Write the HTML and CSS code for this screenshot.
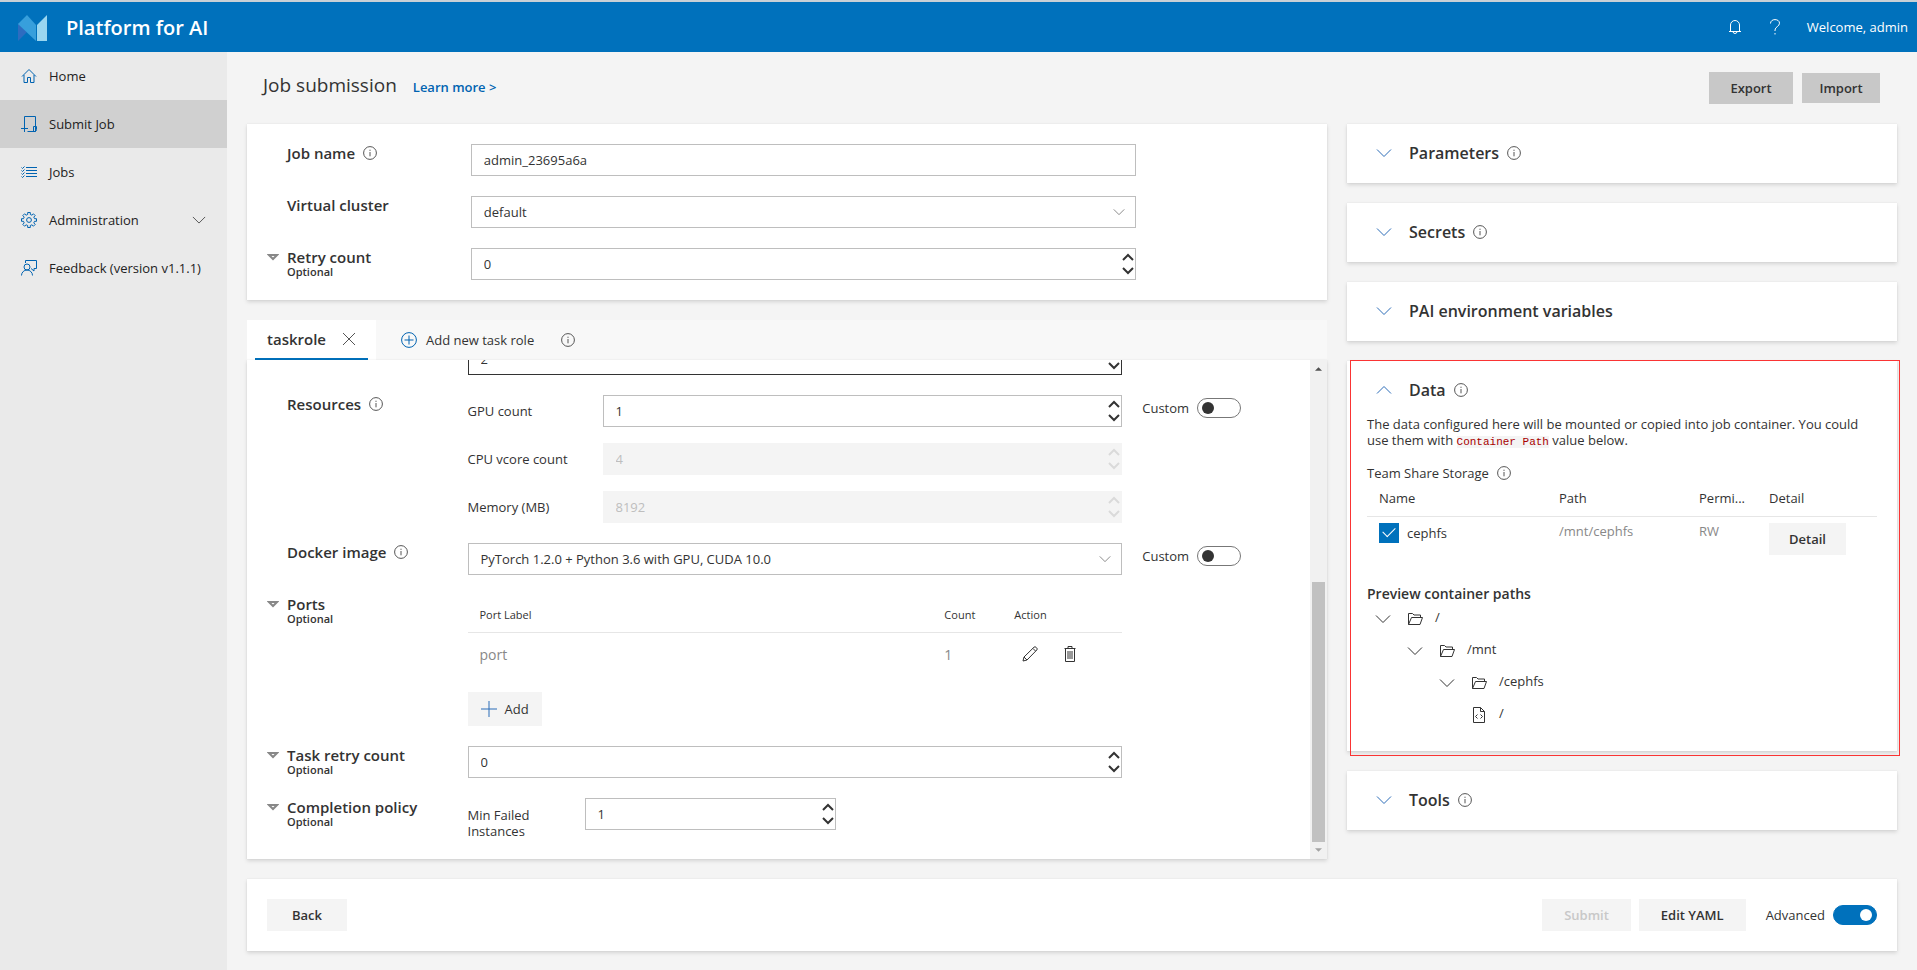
FILE: index.html
```html
<!DOCTYPE html>
<html lang="en">
<head>
    <meta charset="UTF-8">
    <meta name="viewport" content="width=device-width, initial-scale=1.0">
    <title>Platform for AI</title>
    <link rel="stylesheet" href="styles.css">
</head>
<body>
    <!-- Icon set -->
    <svg class="icon-set" aria-hidden="true">
        <symbol id="i-info" viewBox="0 0 14 14"><circle cx="7" cy="7" r="6.4"/><path d="M7 6v4.3M7 3.7v1.2"/></symbol>
        <symbol id="i-chevron" viewBox="0 0 16 16"><path d="M1 4.5l7 7 7-7"/></symbol>
        <symbol id="i-step-up" viewBox="0 0 12 8"><path d="M1 7l5-5 5 5"/></symbol>
        <symbol id="i-step-down" viewBox="0 0 12 8"><path d="M1 1l5 5 5-5"/></symbol>
        <symbol id="i-triangle" viewBox="0 0 12 7"><path d="M2 1h8L6 5z"/></symbol>
        <symbol id="i-folder" viewBox="0 0 16 16"><path d="M1.500 13.500v-11h4l1.500 1.500h6.500v3M1.500 13.500l3-7H15.500l-2.500 7z"/></symbol>
        <symbol id="i-file" viewBox="0 0 16 16"><path d="M2.500.500h7l4 4v11h-11zM9.500.500v4h4M6.500 7.500l-2 2 2 2M9.500 7.500l2 2-2 2"/></symbol>
    </svg>

    <header class="header">
        <svg class="logo" viewBox="0 0 30 26" aria-hidden="true">
            <path fill="#2d6cc0" d="M0 8v18l9-9z"/>
            <path fill="#379fdc" d="M0 9l9-9 9 10v16z"/>
            <path fill="#9ad6f0" d="M19 10L29 0v26H19z"/>
        </svg>
        <div class="brand">Platform for AI</div>
        <button class="header-button" aria-label="Notifications">
            <svg viewBox="0 0 16 16"><path d="M3.500 12.500V6a4.500 4.500 0 0 1 9 0v6.500M2 12.500h12M6 12.500a2 2 0 0 0 4 0"/></svg>
        </button>
        <button class="header-button" aria-label="Help">
            <svg viewBox="0 0 16 16"><path d="M3.500 4.500C3.500 2 5.500.600 8 .600s4.500 1.400 4.500 3.600c0 3.300-4.500 3.600-4.500 6.800v1M8 14v1.500"/></svg>
        </button>
        <span class="welcome">Welcome, admin</span>
    </header>

    <div class="page">
        <nav class="sidebar">
            <a class="nav-item" href="#">
                <svg viewBox="0 0 16 16"><path d="M1 8.500l7-7 7 7M3 7v7.500h3.500v-5h3v5H13V7"/></svg>
                Home
            </a>
            <a class="nav-item active" href="#">
                <svg viewBox="0 0 16 16"><path d="M3.500 9V.500h11v15h-8M0 12.500h7M3.500 9v7M12.500 15.500v-5h3v3q0 2-2 2"/></svg>
                Submit Job
            </a>
            <a class="nav-item" href="#">
                <svg viewBox="0 0 16 16"><path d="M5 3.500h11M5 6.500h11M5 9.500h11M5 12.500h11M.500 3.500l1 1 2-2M.500 6.500l1 1 2-2M.500 9.500l1 1 2-2M.500 12.500l1 1 2-2"/></svg>
                Jobs
            </a>
            <a class="nav-item" href="#">
                <svg viewBox="0 0 16 16"><path d="M6.700.500h2.600v2l1.600.700L12.400 1.800l1.800 1.800-1.400 1.500.700 1.600h2v2.600h-2l-.700 1.600 1.400 1.500-1.800 1.800-1.500-1.400-1.600.700v2H6.700v-2l-1.600-.700-1.500 1.400-1.800-1.800 1.400-1.500-.700-1.600h-2V6.700h2l.700-1.600-1.400-1.500 1.800-1.800 1.500 1.400 1.600-.700z"/><circle cx="8" cy="8" r="2.400"/></svg>
                Administration
                <svg class="nav-chevron"><use href="#i-chevron"/></svg>
            </a>
            <a class="nav-item" href="#">
                <svg viewBox="0 0 16 16"><path d="M4.500 3V.500h11v8h-2.500v2.500L10 8.500"/><circle cx="6" cy="7" r="3"/><path d="M.500 15.500a5.500 5.500 0 0 1 11 0"/></svg>
                Feedback (version v1.1.1)
            </a>
        </nav>

        <main class="main">
            <div class="title-bar">
                <h1>Job submission</h1>
                <a class="learn-more" href="#">Learn more &gt;</a>
                <button class="button export">Export</button>
                <button class="button import">Import</button>
            </div>

            <div class="columns">
                <div class="left">
                    <section class="card job-info">
                        <div class="row">
                            <div class="label"><label for="job-name">Job name</label><svg class="info"><use href="#i-info"/></svg></div>
                            <input class="box" type="text" id="job-name" value="admin_23695a6a">
                        </div>
                        <div class="row">
                            <div class="label"><label for="cluster">Virtual cluster</label></div>
                            <div class="select">
                                <select class="box" id="cluster"><option>default</option></select>
                                <svg><use href="#i-chevron"/></svg>
                            </div>
                        </div>
                        <div class="row">
                            <div class="label optional">
                                <svg class="triangle"><use href="#i-triangle"/></svg>
                                <label for="retry">Retry count</label>
                                <small>Optional</small>
                            </div>
                            <div class="box number">
                                <input type="number" id="retry" value="0">
                                <div class="stepper">
                                    <button aria-label="Increase"><svg><use href="#i-step-up"/></svg></button>
                                    <button aria-label="Decrease"><svg><use href="#i-step-down"/></svg></button>
                                </div>
                            </div>
                        </div>
                    </section>

                    <section class="task-role">
                        <div class="tabs">
                            <div class="tab">
                                <button class="tab-name">taskrole</button>
                                <button class="tab-close" aria-label="Close"><svg viewBox="0 0 14 14"><path d="M1 1l12 12M13 1L1 13"/></svg></button>
                            </div>
                            <button class="add-role">
                                <svg viewBox="0 0 16 16"><circle cx="8" cy="8" r="7.400"/><path d="M8 3.500v9M3.500 8h9"/></svg>
                                Add new task role
                            </button>
                            <svg class="info"><use href="#i-info"/></svg>
                        </div>
                        <div class="scroll-panel">
                            <div class="scroll-content">
                                <div class="row">
                                    <div class="label"><label for="instances">Instances</label></div>
                                    <div class="box number focused">
                                        <input type="number" id="instances" value="2">
                                        <div class="stepper">
                                            <button aria-label="Increase"><svg><use href="#i-step-up"/></svg></button>
                                            <button aria-label="Decrease"><svg><use href="#i-step-down"/></svg></button>
                                        </div>
                                    </div>
                                </div>
                                <div class="row">
                                    <div class="label">Resources<svg class="info"><use href="#i-info"/></svg></div>
                                    <div class="resources">
                                        <label for="gpu">GPU count</label>
                                        <div class="box number">
                                            <input type="number" id="gpu" value="1">
                                            <div class="stepper">
                                                <button aria-label="Increase"><svg><use href="#i-step-up"/></svg></button>
                                                <button aria-label="Decrease"><svg><use href="#i-step-down"/></svg></button>
                                            </div>
                                        </div>
                                        <label for="cpu">CPU vcore count</label>
                                        <div class="box number disabled">
                                            <input type="number" id="cpu" value="4" disabled>
                                            <div class="stepper">
                                                <button aria-label="Increase" disabled><svg><use href="#i-step-up"/></svg></button>
                                                <button aria-label="Decrease" disabled><svg><use href="#i-step-down"/></svg></button>
                                            </div>
                                        </div>
                                        <label for="memory">Memory (MB)</label>
                                        <div class="box number disabled">
                                            <input type="number" id="memory" value="8192" disabled>
                                            <div class="stepper">
                                                <button aria-label="Increase" disabled><svg><use href="#i-step-up"/></svg></button>
                                                <button aria-label="Decrease" disabled><svg><use href="#i-step-down"/></svg></button>
                                            </div>
                                        </div>
                                    </div>
                                    <label class="custom">Custom <input class="toggle" type="checkbox"></label>
                                </div>
                                <div class="row">
                                    <div class="label"><label for="image">Docker image</label><svg class="info"><use href="#i-info"/></svg></div>
                                    <div class="select">
                                        <select class="box" id="image"><option>PyTorch 1.2.0 + Python 3.6 with GPU, CUDA 10.0</option></select>
                                        <svg><use href="#i-chevron"/></svg>
                                    </div>
                                    <label class="custom">Custom <input class="toggle" type="checkbox"></label>
                                </div>
                                <div class="row">
                                    <div class="label optional">
                                        <svg class="triangle"><use href="#i-triangle"/></svg>
                                        <span>Ports</span>
                                        <small>Optional</small>
                                    </div>
                                    <div class="ports">
                                        <table class="ports-table">
                                            <thead>
                                                <tr><th class="port-label">Port Label</th><th class="port-count">Count</th><th>Action</th></tr>
                                            </thead>
                                            <tbody>
                                                <tr>
                                                    <td>port</td>
                                                    <td>1</td>
                                                    <td class="port-actions">
                                                        <button aria-label="Edit"><svg viewBox="0 0 16 16"><path d="M1 15l1-4L12 1.200q1-1 2.200.200l.400.400q1.200 1.200.200 2.200L5 14zM2 11l3 3M11 2.500L13.500 5"/></svg></button>
                                                        <button aria-label="Delete"><svg viewBox="0 0 16 16"><path d="M2.500 2.500h11M6 2.500v-2h4v2M3.500 2.500v13h9v-13M6 5v8M8 5v8M10 5v8"/></svg></button>
                                                    </td>
                                                </tr>
                                            </tbody>
                                        </table>
                                        <button class="add-port"><svg viewBox="0 0 16 16"><path d="M8 0v16M0 8h16"/></svg>Add</button>
                                    </div>
                                </div>
                                <div class="row">
                                    <div class="label optional">
                                        <svg class="triangle"><use href="#i-triangle"/></svg>
                                        <label for="task-retry">Task retry count</label>
                                        <small>Optional</small>
                                    </div>
                                    <div class="box number">
                                        <input type="number" id="task-retry" value="0">
                                        <div class="stepper">
                                            <button aria-label="Increase"><svg><use href="#i-step-up"/></svg></button>
                                            <button aria-label="Decrease"><svg><use href="#i-step-down"/></svg></button>
                                        </div>
                                    </div>
                                </div>
                                <div class="row">
                                    <div class="label optional">
                                        <svg class="triangle"><use href="#i-triangle"/></svg>
                                        <span>Completion policy</span>
                                        <small>Optional</small>
                                    </div>
                                    <div class="completion">
                                        <label for="min-failed">Min Failed Instances</label>
                                        <div class="box number">
                                            <input type="number" id="min-failed" value="1">
                                            <div class="stepper">
                                                <button aria-label="Increase"><svg><use href="#i-step-up"/></svg></button>
                                                <button aria-label="Decrease"><svg><use href="#i-step-down"/></svg></button>
                                            </div>
                                        </div>
                                    </div>
                                </div>
                            </div>
                            <div class="scrollbar" aria-hidden="true">
                                <svg class="arrow-up" viewBox="0 0 8 4"><path d="M4 0l4 4H0z"/></svg>
                                <div class="track"><div class="thumb"></div></div>
                                <svg class="arrow-down" viewBox="0 0 8 4"><path d="M0 0h8L4 4z"/></svg>
                            </div>
                        </div>
                    </section>
                </div>

                <aside class="right">
                    <section class="card panel">
                        <button class="panel-title"><svg class="panel-chevron"><use href="#i-chevron"/></svg>Parameters<svg class="info"><use href="#i-info"/></svg></button>
                    </section>
                    <section class="card panel">
                        <button class="panel-title"><svg class="panel-chevron"><use href="#i-chevron"/></svg>Secrets<svg class="info"><use href="#i-info"/></svg></button>
                    </section>
                    <section class="card panel">
                        <button class="panel-title"><svg class="panel-chevron"><use href="#i-chevron"/></svg>PAI environment variables</button>
                    </section>
                    <section class="card panel data">
                        <button class="panel-title"><svg class="panel-chevron open"><use href="#i-chevron"/></svg>Data<svg class="info"><use href="#i-info"/></svg></button>
                        <div class="data-body">
                            <p>The data configured here will be mounted or copied into job container. You could use them with <code>Container Path</code> value below.</p>
                            <div class="storage-title">Team Share Storage<svg class="info"><use href="#i-info"/></svg></div>
                            <table class="storage-table">
                                <thead>
                                    <tr><th class="col-name">Name</th><th class="col-path">Path</th><th class="col-permission">Permi...</th><th>Detail</th></tr>
                                </thead>
                                <tbody>
                                    <tr>
                                        <td><label class="storage-name"><input type="checkbox" checked>cephfs</label></td>
                                        <td class="muted">/mnt/cephfs</td>
                                        <td class="muted">RW</td>
                                        <td><button class="button detail">Detail</button></td>
                                    </tr>
                                </tbody>
                            </table>
                            <h3>Preview container paths</h3>
                            <ul class="tree">
                                <li>
                                    <div class="node"><svg class="node-chevron"><use href="#i-chevron"/></svg><svg><use href="#i-folder"/></svg><span>/</span></div>
                                    <ul>
                                        <li>
                                            <div class="node"><svg class="node-chevron"><use href="#i-chevron"/></svg><svg><use href="#i-folder"/></svg><span>/mnt</span></div>
                                            <ul>
                                                <li>
                                                    <div class="node"><svg class="node-chevron"><use href="#i-chevron"/></svg><svg><use href="#i-folder"/></svg><span>/cephfs</span></div>
                                                    <ul>
                                                        <li><div class="node"><svg><use href="#i-file"/></svg><span>/</span></div></li>
                                                    </ul>
                                                </li>
                                            </ul>
                                        </li>
                                    </ul>
                                </li>
                            </ul>
                        </div>
                        <div class="highlight"></div>
                    </section>
                    <section class="card panel">
                        <button class="panel-title"><svg class="panel-chevron"><use href="#i-chevron"/></svg>Tools<svg class="info"><use href="#i-info"/></svg></button>
                    </section>
                </aside>
            </div>

            <footer class="card actions">
                <button class="button back">Back</button>
                <button class="button submit" disabled>Submit</button>
                <button class="button">Edit YAML</button>
                <label class="advanced">Advanced <input class="toggle" type="checkbox" checked></label>
            </footer>
        </main>
    </div>
</body>
</html>
```
FILE: styles.css
```css
* {
    box-sizing: border-box;
}

body {
    display: flex;
    flex-direction: column;
    min-height: 100vh;
    margin: 0;
    font-family: "Open Sans", "Noto Sans", sans-serif;
    font-size: 13px;
    line-height: 16px;
    color: #333333;
    background-color: #f4f4f4;
}

button,
input,
select {
    font: inherit;
    color: inherit;
}

button {
    padding: 0;
    border: none;
    background: none;
    cursor: pointer;
}

a {
    text-decoration: none;
}

h1,
h3,
p,
ul {
    margin: 0;
    padding: 0;
    list-style: none;
}

svg {
    flex: none;
    width: 16px;
    height: 16px;
    fill: none;
    stroke: currentColor;
}

.icon-set {
    display: none;
}

.info {
    width: 14px;
    height: 14px;
    margin-left: 8px;
    color: #555555;
}

/* Header */
.header {
    display: flex;
    align-items: center;
    height: 52px;
    padding: 2px 9px 0 18px;
    border-top: 2px solid #c8d0d6;
    background-color: #0071bc;
    color: #ffffff;
}

.logo {
    width: 30px;
    height: 26px;
    margin-right: 18px;
    stroke: none;
}

.brand {
    flex: 1;
    font-size: 20px;
    line-height: 24px;
    font-weight: 600;
}

.header-button {
    display: flex;
    margin-right: 24px;
}

.header-button,
.welcome {
    padding-bottom: 2px;
}

/* Sidebar */
.page {
    display: flex;
    flex: 1;
}

.sidebar {
    flex: none;
    width: 227px;
    background-color: #eaeaea;
}

.nav-item {
    display: flex;
    align-items: center;
    gap: 12px;
    height: 48px;
    padding: 0 21px;
    color: #222222;
}

.nav-item svg {
    color: #0063b1;
}

.nav-item.active {
    background-color: #d0d0d0;
}

.nav-item .nav-chevron {
    width: 14px;
    height: 14px;
    margin-left: auto;
    color: #444444;
}

/* Main */
.main {
    display: flex;
    flex: 1;
    flex-direction: column;
    min-width: 0;
    padding: 0 20px 19px;
}

.title-bar {
    display: flex;
    align-items: center;
    height: 72px;
    padding: 0 17px 0 16px;
}

.title-bar h1 {
    padding-bottom: 6px;
    font-size: 19px;
    line-height: 24px;
    font-weight: 400;
}

.learn-more {
    margin-left: 16px;
    padding-bottom: 2px;
    font-weight: 600;
    color: #0063b1;
}

.button {
    height: 32px;
    padding: 0 20px;
    font-weight: 600;
    background-color: #f4f4f4;
}

.button.export,
.button.import {
    padding: 0 8px;
    background-color: #c8c8c8;
}

.button.export {
    width: 84px;
    margin-left: auto;
}

.button.import {
    width: 78px;
    height: 30px;
    margin-left: 9px;
}

.columns {
    display: grid;
    flex: 1;
    grid-template-columns: minmax(0, 1fr) calc(100% / 3);
    gap: 20px;
}

.left,
.right {
    display: flex;
    flex-direction: column;
    gap: 20px;
}

.card {
    background-color: #ffffff;
    box-shadow: 0 2px 4px rgba(0, 0, 0, 0.13), 0 0 1px rgba(0, 0, 0, 0.1);
}

/* Form rows */
.job-info {
    display: flex;
    flex-direction: column;
    gap: 20px;
    padding: 20px;
}

.row {
    display: grid;
    grid-template-columns: 19.6% 64% 1fr;
    align-items: start;
}

.label {
    display: flex;
    align-items: center;
    padding-left: 20px;
    font-size: 15px;
    line-height: 18px;
    font-weight: 600;
}

.label.optional {
    display: grid;
    grid-template-columns: 20px 1fr;
    padding-left: 0;
}

.label small {
    grid-column: 2;
    font-size: 11px;
    line-height: 12px;
}

.triangle {
    width: 12px;
    height: 7px;
    stroke: #888888;
    stroke-width: 2;
}

.box {
    width: 100%;
    height: 32px;
    padding: 0 12px;
    border: 1px solid #bebebe;
    border-radius: 0;
    background-color: #ffffff;
    appearance: none;
}

.number {
    display: flex;
    padding-right: 1px;
}

.number input {
    flex: 1;
    min-width: 0;
    padding: 0;
    border: none;
    outline: none;
    background: none;
    appearance: textfield;
}

.focused {
    border-color: #333333;
}

.disabled {
    border-color: #f4f4f4;
    background-color: #f4f4f4;
    color: #bebebe;
}

.stepper {
    display: flex;
    flex-direction: column;
    justify-content: center;
    gap: 6px;
}

.stepper button {
    display: flex;
}

.stepper svg {
    width: 12px;
    height: 8px;
    stroke-width: 2;
}

.disabled .stepper {
    color: #dadada;
}

.select {
    display: grid;
    align-items: center;
}

.select select,
.select svg {
    grid-area: 1 / 1;
}

.select svg {
    width: 12px;
    height: 12px;
    margin-right: 11px;
    justify-self: end;
    color: #666666;
    pointer-events: none;
}

.toggle {
    display: flex;
    align-items: center;
    width: 44px;
    height: 20px;
    margin: 0;
    padding: 0 4px;
    border: 1px solid #777777;
    border-radius: 10px;
    background-color: #ffffff;
    appearance: none;
}

.toggle::before {
    content: "";
    width: 12px;
    height: 12px;
    border-radius: 50%;
    background-color: #333333;
}

.toggle:checked {
    justify-content: flex-end;
    border-color: #0071bc;
    background-color: #0071bc;
}

.toggle:checked::before {
    background-color: #ffffff;
}

.custom,
.advanced {
    display: flex;
    align-items: center;
    gap: 8px;
    margin-left: 20px;
}

.custom {
    padding-top: 3px;
}

/* Task role */
.task-role {
    display: flex;
    flex: 1;
    flex-direction: column;
}

.tabs {
    display: flex;
    align-items: center;
    height: 40px;
    background-color: #f8f8f8;
}

.tab {
    display: flex;
    align-items: center;
    gap: 16px;
    width: 129px;
    height: 40px;
    padding: 0 8px 2px;
    background: linear-gradient(#0071bc, #0071bc) center bottom / 113px 2px no-repeat #ffffff;
}

.tab-name {
    padding-left: 12px;
    font-size: 15px;
    font-weight: 600;
}

.tab-close {
    display: flex;
}

.tab-close svg {
    width: 14px;
    height: 14px;
    color: #555555;
}

.add-role {
    display: flex;
    align-items: center;
    gap: 9px;
    margin: 0 19px 0 25px;
}

.add-role svg {
    color: #0063b1;
}

.scroll-panel {
    display: flex;
    flex: 1;
    background-color: #ffffff;
    box-shadow: 0 2px 4px rgba(0, 0, 0, 0.13), 0 0 1px rgba(0, 0, 0, 0.1);
}

.scroll-content {
    display: flex;
    flex: 1;
    flex-direction: column;
    justify-content: flex-end;
    gap: 20px;
    height: 499px;
    padding: 0 20px 20px;
    overflow: hidden;
}

.resources {
    display: grid;
    grid-template-columns: 135px 1fr;
    align-items: center;
    gap: 16px 0;
}

.ports-table {
    width: 100%;
    margin-bottom: 14px;
    border-collapse: collapse;
    text-align: left;
}

.ports-table th {
    height: 37px;
    padding: 3px 12px 0;
    border-bottom: 1px solid #e6e6e6;
    font-size: 11px;
    font-weight: 400;
}

.ports-table td {
    height: 46px;
    padding: 0 12px;
    font-size: 14px;
    color: #888888;
}

.ports-table .port-label {
    width: 71%;
}

.ports-table .port-count {
    width: 70px;
}

.ports-table .port-actions {
    padding-left: 20px;
}

.port-actions button {
    margin-right: 20px;
    color: #333333;
}

.port-actions svg {
    display: block;
}

.add-port {
    display: flex;
    align-items: center;
    gap: 8px;
    height: 34px;
    padding: 0 13px;
    background-color: #f4f4f4;
}

.add-port svg {
    color: #2b6cb8;
}

.completion {
    display: flex;
    align-items: flex-start;
}

.completion label {
    width: 117px;
    padding: 9px 30px 0 0;
}

.completion .number {
    width: 251px;
}

.scrollbar {
    display: flex;
    flex-direction: column;
    align-items: center;
    width: 17px;
    padding: 7px 0;
    background-color: #f1f1f1;
}

.scrollbar svg {
    width: 7px;
    height: 4px;
    fill: #505050;
    stroke: none;
}

.scrollbar .arrow-down {
    fill: #a3a3a3;
}

.track {
    display: flex;
    flex: 1;
    flex-direction: column;
    justify-content: flex-end;
    width: 13px;
    padding: 6px 0;
}

.thumb {
    height: 56%;
    background-color: #c1c1c1;
}

/* Right panels */
.panel {
    position: relative;
    padding: 19px 20px 20px;
}

.panel-title {
    display: flex;
    align-items: center;
    height: 20px;
    padding-left: 9px;
    font-size: 16px;
    font-weight: 600;
}

.panel-chevron {
    margin-right: 17px;
    color: #2b6cb8;
}

.panel-chevron.open {
    transform: rotate(180deg);
}

.data-body {
    padding-top: 16px;
}

code {
    font-family: "Liberation Mono", monospace;
    font-size: 11px;
    line-height: 14px;
    color: #a80000;
    background-color: #f4f4f4;
}

.storage-title {
    display: flex;
    align-items: center;
    margin-top: 16px;
}

.storage-table {
    width: 100%;
    border-collapse: collapse;
    table-layout: fixed;
    text-align: left;
}

.storage-table th {
    height: 35px;
    padding: 0 0 0 12px;
    border-bottom: 1px solid #e6e6e6;
    font-weight: 400;
}

.storage-table td {
    padding: 6px 0 6px 12px;
    vertical-align: top;
}

.storage-table .muted {
    color: #888888;
}

.storage-table .col-name {
    width: 180px;
}

.storage-table .col-path {
    width: 140px;
}

.storage-table .col-permission {
    width: 70px;
}

.storage-name {
    display: flex;
    align-items: center;
    gap: 8px;
}

.storage-name input {
    display: grid;
    place-items: center;
    width: 20px;
    height: 20px;
    margin: 0;
    background-color: #0071bc;
    appearance: none;
}

.storage-name input::before {
    content: "";
    width: 11px;
    height: 6px;
    margin-bottom: 4px;
    border: solid #ffffff;
    border-width: 0 0 1px 1px;
    transform: rotate(-45deg);
}

.data h3 {
    margin-top: 24px;
    font-size: 14px;
    line-height: 18px;
    font-weight: 600;
}

.node {
    display: flex;
    align-items: center;
    gap: 16px;
    height: 32px;
    padding-left: 8px;
}

.node span {
    padding-bottom: 4px;
    margin-left: -4px;
}

.tree ul {
    padding-left: 32px;
}

.highlight {
    position: absolute;
    inset: -1px -3px -5px 3px;
    border: 1px solid #fa3434;
    pointer-events: none;
}

/* Bottom bar */
.actions {
    display: flex;
    gap: 8px;
    margin-top: 20px;
    padding: 20px;
}

.actions .button {
    padding: 0 22px;
}

.back {
    width: 80px;
    margin-right: auto;
}

.submit {
    color: #c8c8c8;
}

.advanced {
    margin-left: 12px;
}
```
